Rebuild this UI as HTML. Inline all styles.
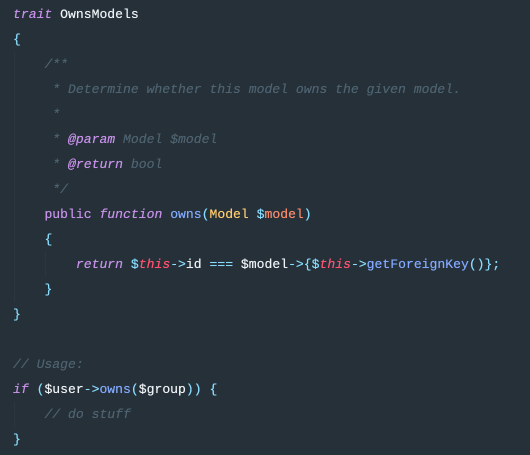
<!DOCTYPE html><html><head><style>
html,body{margin:0;padding:0;background:#263039;width:530px;height:455px;overflow:hidden}
pre{margin:0;padding:2px 0 0 13px;font-family:"Liberation Mono",monospace;font-size:13.1px;line-height:25px;color:#eef3f6;position:relative;text-shadow:0 0 0.4px currentColor}
.k{color:#c792ea;font-style:italic}.p{color:#c792ea}.c{color:#4e6370;font-style:italic}.t{color:#c792ea;font-style:italic}
.b{color:#89ddff}.f{color:#82aaff}.y{color:#ffcb6b}.r{color:#ff5370;font-style:italic}.o{color:#f78c6c}.v{color:#89ddff}
.g{position:absolute;width:1px;background:#2c363e}
</style></head><body>
<div class="g" style="left:14px;top:52px;height:250px"></div>
<div class="g" style="left:45px;top:252px;height:25px"></div>
<div class="g" style="left:14px;top:402px;height:25px"></div>
<pre><span class="k">trait</span> OwnsModels
<span class="b">{</span>
    <span class="c">/**</span>
<span class="c">     * Determine whether this model owns the given model.</span>
<span class="c">     *</span>
<span class="c">     * </span><span class="t">@param</span><span class="c"> Model $model</span>
<span class="c">     * </span><span class="t">@return</span><span class="c"> bool</span>
<span class="c">     */</span>
    <span class="p">public</span> <span class="k">function</span> <span class="f">owns</span><span class="b">(</span><span class="y">Model</span> <span class="v">$</span><span class="o">model</span><span class="b">)</span>
    <span class="b">{</span>
        <span class="k">return</span> <span class="v">$</span><span class="r">this</span><span class="b">-&gt;</span>id <span class="b">===</span> $model<span class="b">-&gt;{</span><span class="v">$</span><span class="r">this</span><span class="b">-&gt;</span><span class="f">getForeignKey</span><span class="b">()};</span>
    <span class="b">}</span>
<span class="b">}</span>

<span class="c">// Usage:</span>
<span class="k">if</span> <span class="b">(</span>$user<span class="b">-&gt;</span><span class="f">owns</span><span class="b">(</span>$group<span class="b">)) {</span>
    <span class="c">// do stuff</span>
<span class="b">}</span></pre>
</body></html>
